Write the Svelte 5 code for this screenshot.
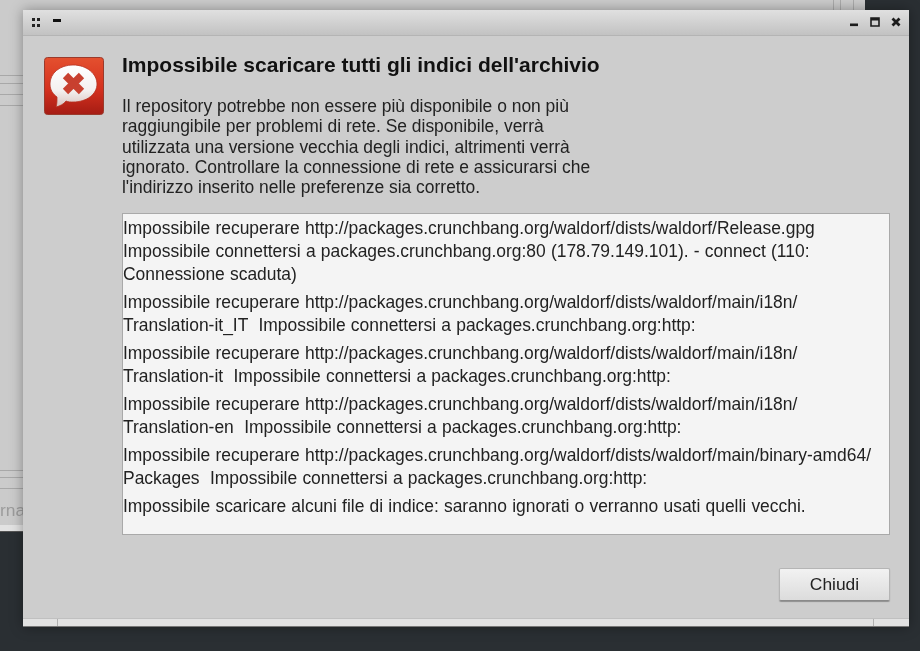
<script>
  const blocks = [
    ["Impossibile recuperare http://packages.crunchbang.org/waldorf/dists/waldorf/Release.gpg", "Impossibile connettersi a packages.crunchbang.org:80 (178.79.149.101). - connect (110:", "Connessione scaduta)"],
    ["Impossibile recuperare http://packages.crunchbang.org/waldorf/dists/waldorf/main/i18n/", "Translation-it_IT  Impossibile connettersi a packages.crunchbang.org:http:"],
    ["Impossibile recuperare http://packages.crunchbang.org/waldorf/dists/waldorf/main/i18n/", "Translation-it  Impossibile connettersi a packages.crunchbang.org:http:"],
    ["Impossibile recuperare http://packages.crunchbang.org/waldorf/dists/waldorf/main/i18n/", "Translation-en  Impossibile connettersi a packages.crunchbang.org:http:"],
    ["Impossibile recuperare http://packages.crunchbang.org/waldorf/dists/waldorf/main/binary-amd64/", "Packages  Impossibile connettersi a packages.crunchbang.org:http:"],
    ["Impossibile scaricare alcuni file di indice: saranno ignorati o verranno usati quelli vecchi."]
  ];
  const intro = [
    "Il repository potrebbe non essere più disponibile o non più",
    "raggiungibile per problemi di rete. Se disponibile, verrà",
    "utilizzata una versione vecchia degli indici, altrimenti verrà",
    "ignorato. Controllare la connessione di rete e assicurarsi che",
    "l'indirizzo inserito nelle preferenze sia corretto."
  ];
</script>

<div class="desktop">
  <div class="backwin">
    <div class="ticks"><i></i><i></i><i></i></div>
    <div class="bars"><i></i><i></i><i></i><i></i></div>
    <div class="bars low"><i></i><i></i><i></i></div>
    <div class="ghost">rna</div>
    <div class="strip"></div>
  </div>

  <div class="window">
    <div class="titlebar">
      <div class="tl">
        <svg width="10" height="9" viewBox="0 0 10 9"><path d="M1 0h3v3H1zM6 0h3v3H6zM1 6h3v3H1zM6 6h3v3H6z" fill="#222"/></svg>
        <span class="shade"></span>
      </div>
      <div class="tr">
        <svg width="10" height="10" viewBox="0 0 10 10"><rect x="1" y="6.500" width="8" height="2.600" fill="#1c1c1c"/></svg>
        <svg width="10" height="10" viewBox="0 0 10 10"><path d="M1 1h8v8H1z" fill="none" stroke="#1c1c1c" stroke-width="1.6"/><rect x="1" y="1" width="8" height="2.500" fill="#1c1c1c"/></svg>
        <svg width="10" height="10" viewBox="0 0 10 10"><path d="M1.500 1.500l7 7M8.500 1.500l-7 7" stroke="#1c1c1c" stroke-width="2.800"/></svg>
      </div>
    </div>

    <div class="body">
      <div class="top">
        <svg class="icon" width="60" height="58" viewBox="0 0 60 58">
          <defs>
            <linearGradient id="red" x1="0" y1="0" x2="0" y2="1">
              <stop offset="0" stop-color="#e4502f"/>
              <stop offset="0.55" stop-color="#d5311e"/>
              <stop offset="1" stop-color="#a51c14"/>
            </linearGradient>
            <linearGradient id="bub" x1="0" y1="0" x2="0" y2="1">
              <stop offset="0" stop-color="#ffffff"/>
              <stop offset="0.6" stop-color="#f4f1f0"/>
              <stop offset="1" stop-color="#d9c4c0"/>
            </linearGradient>
          </defs>
          <rect x="0.500" y="0.500" width="59" height="57" rx="3" fill="url(#red)" stroke="#9a3a2c"/>
          <path d="M29 8C16 8 6 16 6 27c0 6 3 10 7 13 0 4 0 7-1 10 4-1 8-3 10-6 2 1 5 1 7 1 14 0 24-8 24-18S43 8 29 8z" fill="url(#bub)" stroke="#b5301f" stroke-width="0.800"/>
          <path d="M21.500 18.500l16 16M37.500 18.500l-16 16" stroke="#c8402f" stroke-width="7.500" fill="none"/>
        </svg>
        <div class="msg">
          <h1>Impossibile scaricare tutti gli indici dell'archivio</h1>
          <div class="intro">
            {#each intro as line}<div>{line}</div>{/each}
          </div>
        </div>
      </div>

      <div class="log">
        {#each blocks as block}
          <p>{#each block as line}<span>{line}</span>{/each}</p>
        {/each}
      </div>

      <div class="actions"><button>Chiudi</button></div>
    </div>

    <div class="statusbar"><b></b><b class="r"></b></div>
  </div>
</div>

<style>
  :global(body) { margin: 0; }
  .desktop {
    position: relative;
    width: 920px;
    height: 651px;
    overflow: hidden;
    background: #2a2f33;
    font-family: "Liberation Sans", Arial, sans-serif;
    filter: blur(0.4px);
  }
  .backwin {
    position: absolute;
    left: 0;
    top: 0;
    width: 865px;
    height: 532px;
    background: #cbcbcb;
    border-bottom: 1px solid #555;
    box-sizing: border-box;
  }
  .ticks { display: flex; margin-left: 833px; gap: 6px; }
  .ticks i { width: 1px; height: 10px; background: #aaa; }
  .ticks i:last-child { margin-left: 6px; }
  .bars { position: absolute; left: 0; top: 75px; width: 23px; }
  .bars i { display: block; height: 1px; background: #a8a8a8; margin-bottom: 7px; }
  .bars i:nth-child(2) { margin-bottom: 10px; }
  .bars i:nth-child(3) { margin-bottom: 10px; }
  .bars.low { top: 470px; }
  .bars.low i:nth-child(1) { margin-bottom: 6px; }
  .ghost {
    position: absolute;
    left: 0;
    top: 500px;
    font-size: 17.4px;
    line-height: 20px;
    color: #9c9c9c;
  }
  .strip {
    position: absolute;
    left: 0;
    right: 0;
    bottom: 0;
    height: 6px;
    background: #e2e2e2;
  }
  .window {
    position: absolute;
    left: 23px;
    top: 10px;
    width: 886px;
    height: 617px;
    display: flex;
    flex-direction: column;
    background: #cdcdcd;
    box-shadow: 0 0 12px rgba(0, 0, 0, 0.35);
  }
  .titlebar {
    height: 26px;
    flex: none;
    display: flex;
    justify-content: space-between;
    align-items: center;
    padding: 0 8px;
    box-sizing: border-box;
    background: linear-gradient(#e0e0e0, #c2c2c2);
    border-bottom: 1px solid #b4b4b4;
  }
  .tl { display: flex; align-items: center; gap: 12px; margin-top: -1px; }
  .shade { width: 8px; height: 3px; background: #111; margin-top: -3px; }
  .tr { display: flex; gap: 11px; margin-top: -1px; }
  .body {
    flex: 1;
    display: flex;
    flex-direction: column;
    padding: 21px 19px 0 21px;
    min-height: 0;
  }
  .top { display: flex; gap: 18px; }
  .icon { flex: none; }
  h1 {
    margin: -4px 0 0;
    font-size: 21px;
    line-height: 24px;
    font-weight: 700;
    color: #111;
    white-space: nowrap;
  }
  .intro {
    margin-top: 19px;
    font-size: 17.45px;
    line-height: 20.25px;
    white-space: pre;
    color: #222;
  }
  .log {
    margin: 16px 0 0 78px;
    height: 322px;
    box-sizing: border-box;
    padding: 3px 0 0;
    background: #f4f4f4;
    border: 1px solid #a9a9a9;
    font-size: 17.45px;
    line-height: 23px;
    word-spacing: 0.35px;
    color: #222;
  }
  .log p { margin: 0 0 5px; }
  .log span { display: block; white-space: pre; }
  .actions { display: flex; justify-content: flex-end; margin-top: 33px; }
  button {
    width: 111px;
    height: 33px;
    padding: 0;
    font: 17.4px "Liberation Sans", Arial, sans-serif;
    color: #222;
    background: linear-gradient(#f2f2f2, #dcdcdc);
    border: 1px solid #b5b5b5;
    border-bottom-color: #8a8a8a;
    border-radius: 2px;
    box-shadow: 0 1px 1px rgba(0, 0, 0, 0.3);
  }
  .statusbar {
    position: relative;
    height: 7px;
    flex: none;
    background: #e2e2e2;
    border-top: 1px solid #c0c0c0;
    border-bottom: 1px solid #777;
  }
  .statusbar b { position: absolute; left: 34px; top: 0; width: 1px; height: 7px; background: #b0b0b0; }
  .statusbar b.r { left: 850px; }
</style>
